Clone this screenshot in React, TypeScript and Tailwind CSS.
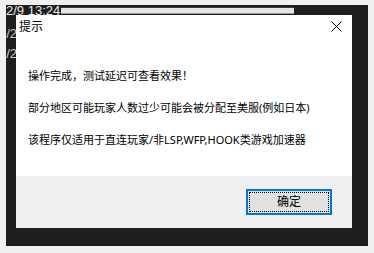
import React from "react";

const cjk = { fontFamily: '"Noto Sans", "Noto Sans CJK SC", sans-serif' };

function CloseIcon() {
  return (
    <svg width="11" height="11" viewBox="0 0 11 11" fill="none">
      <path d="M0.5 0.5 L10.5 10.5 M10.5 0.5 L0.5 10.5" stroke="#000" strokeWidth="1" />
    </svg>
  );
}

export default function App() {
  const lines = [
    "操作完成，测试延迟可查看效果！",
    "部分地区可能玩家人数过少可能会被分配至美服(例如日本)",
    "该程序仅适用于直连玩家/非LSP,WFP,HOOK类游戏加速器",
  ];

  return (
    <div className="w-[374px] h-[253px] bg-[#f0f0f0] pl-[6px] pt-[5px] overflow-hidden">
      <div className="relative w-[362px] h-[241px] bg-[#1e1e1e] overflow-hidden">
        {/* app behind the dialog */}
        <div
          className="flex flex-col text-[13px] leading-none text-[#e8e8e8]"
          style={{ fontFamily: '"Liberation Sans", Arial, sans-serif' }}
        >
          <div className="flex items-start -mt-[1px] h-[23px]">
            <span className="whitespace-nowrap">2/9 13:24</span>
            <div className="ml-[1px] mt-[3px] w-[233px] h-[7px] bg-[#e4e4e4] border-t border-t-[#3a3a3a] border-b border-b-[#9a9a9a]" />
          </div>
          <span className="-ml-[7px] h-[20px] whitespace-nowrap text-[#c8c8c8]">1/2,</span>
          <span className="-ml-[7px] h-[20px] whitespace-nowrap text-[#c8c8c8]">1/2,</span>
        </div>

        {/* message box */}
        <div className="absolute left-[10px] top-[10px] w-[336px] h-[213px] flex flex-col bg-white" style={cjk}>
          <div className="flex items-center justify-between h-[23px] pl-[3px] pr-[10px]">
            <span className="text-[12px] text-black leading-none">提示</span>
            <CloseIcon />
          </div>
          <div className="flex-1 flex flex-col pl-[12px] pt-[22px]">
            {lines.map((l) => (
              <div key={l} className="h-[32px] leading-[32px] text-[11px] text-black whitespace-nowrap">
                {l}
              </div>
            ))}
          </div>
          <div className="h-[52px] bg-[#f0f0f0] flex items-center justify-end pr-[20px]">
            <button className="w-[86px] h-[26px] border-2 border-[#0078d7] bg-[#e1e1e1] p-[1px]">
              <span className="flex w-full h-full items-center justify-center border border-dotted border-black text-[12px] text-black leading-none">
                确定
              </span>
            </button>
          </div>
        </div>
      </div>
    </div>
  );
}
